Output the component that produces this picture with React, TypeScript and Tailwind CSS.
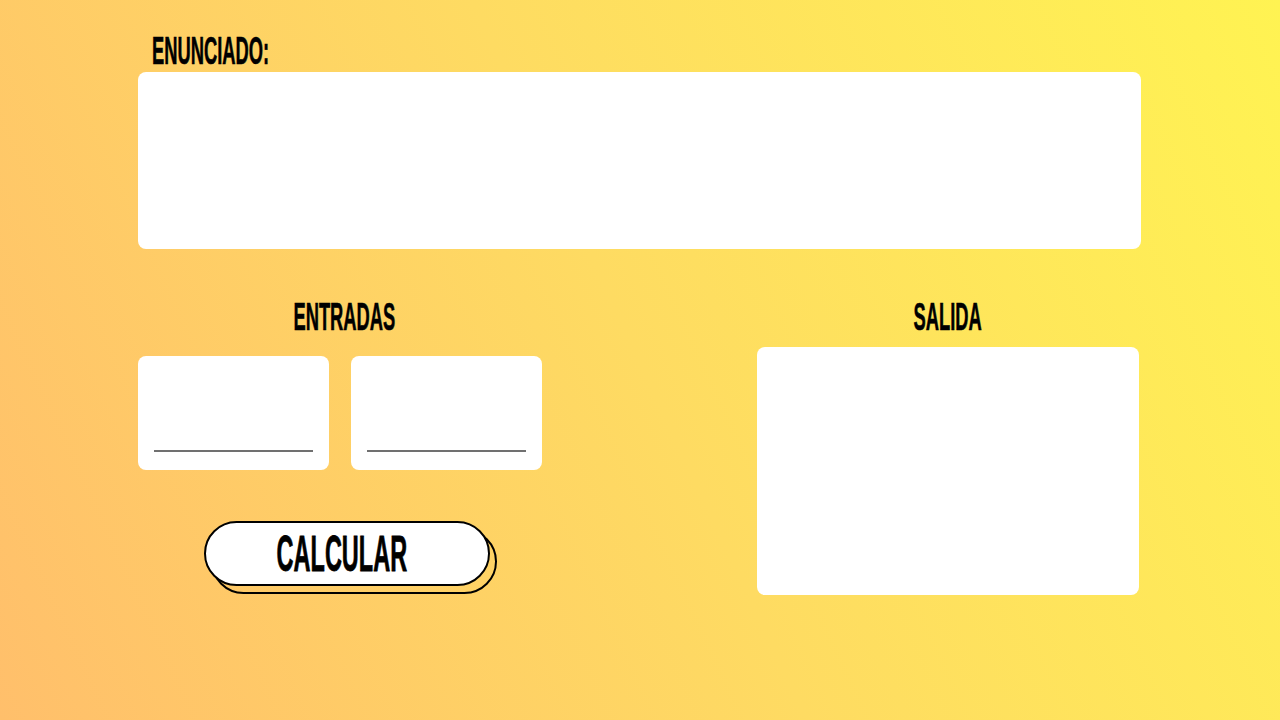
const font = { fontFamily: '"Liberation Sans", Arial, sans-serif' }

const Heading = ({ text, className }: { text: string; className?: string }) => (
  <div
    className={`h-[39px] text-[39px] leading-none font-bold text-black [-webkit-text-stroke:0.6px_black] ${className ?? ""}`}
    style={font}
  >
    <span className="inline-block scale-x-[0.47] origin-center">{text}</span>
  </div>
)

const InputCard = () => (
  <div className="flex h-[114px] w-[191px] flex-col justify-end rounded-lg bg-white px-4 pb-[18px]">
    <div className="h-[2px] w-full bg-[#707070]"></div>
  </div>
)

export default function App() {
  return (
    <div className="h-[720px] w-full pl-[138px] bg-[linear-gradient(65deg,#ffbf6b_0%,#fedb62_50%,#fff352_100%)]">
      <div className="w-[1003px] pt-[31px]">
        <div
          className="h-[39px] pl-[14px] text-[39px] leading-none font-bold text-black [-webkit-text-stroke:0.6px_black]"
          style={font}
        >
          <span className="inline-block scale-x-[0.47] origin-left">ENUNCIADO:</span>
        </div>
        <div className="mt-[2px] h-[177px] w-full rounded-lg bg-white"></div>

        <div className="mt-[48px] flex justify-between pr-[2px]">
          <div className="w-[404px]">
            <Heading text="ENTRADAS" className="pl-[8px] text-center" />
            <div className="mt-[20px] flex gap-[22px]">
              <InputCard />
              <InputCard />
            </div>
            <div className="relative mt-[51px] ml-[66px] h-[65px] w-[286px]">
              <div className="absolute top-[8px] left-[7px] h-full w-full rounded-full border-2 border-black"></div>
              <button
                className="relative flex h-full w-full items-center justify-center rounded-full border-2 border-black bg-white pr-[10px] text-[50px] leading-none font-bold text-black [-webkit-text-stroke:0.8px_black]"
                style={font}
              >
                <span className="inline-block scale-x-[0.47]">CALCULAR</span>
              </button>
            </div>
          </div>
          <div className="w-[382px]">
            <Heading text="SALIDA" className="text-center" />
            <div className="mt-[11px] h-[248px] w-full rounded-lg bg-white"></div>
          </div>
        </div>
      </div>
    </div>
  )
}
